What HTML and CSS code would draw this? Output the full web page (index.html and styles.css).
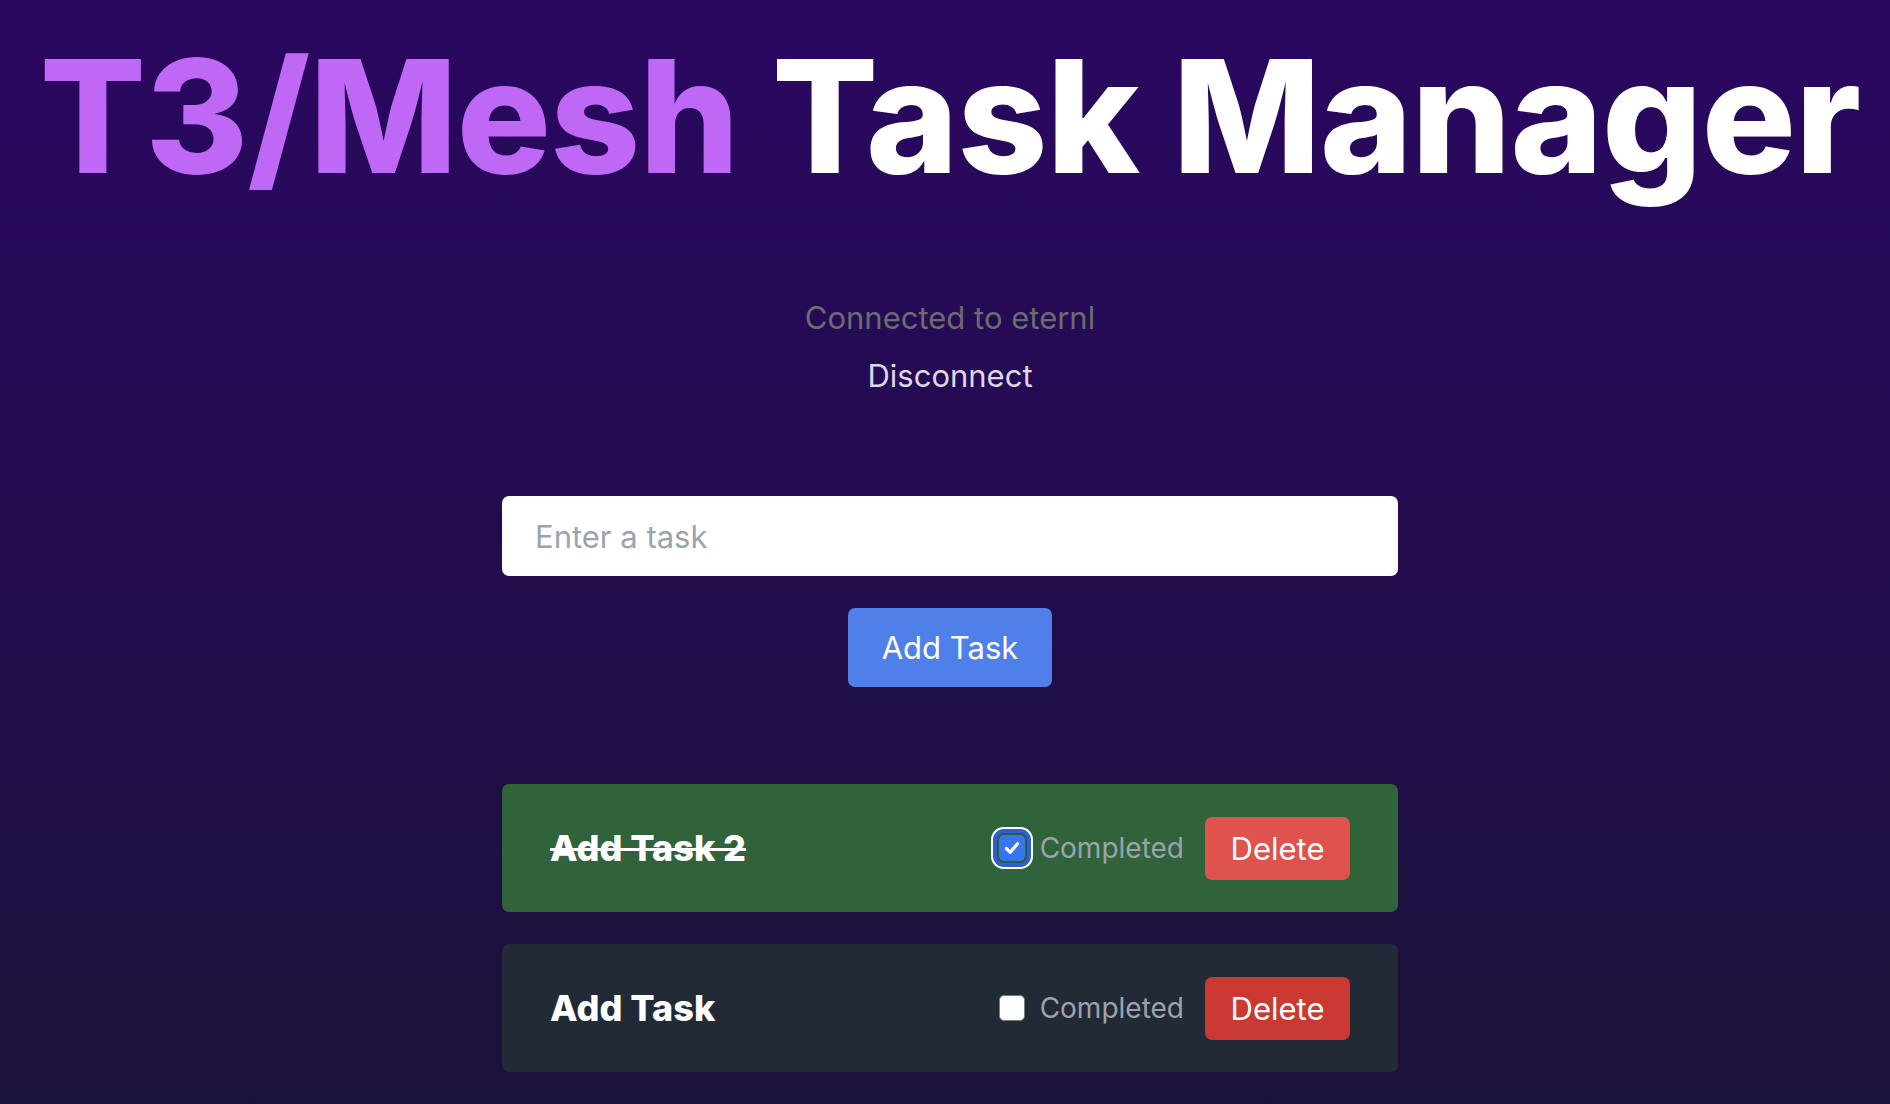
FILE: index.html
```html
<!DOCTYPE html>
<html lang="en">
<head>
<meta charset="utf-8">
<title>T3/Mesh Task Manager</title>
<link rel="stylesheet" href="styles.css">
</head>
<body>
<main class="page">
  <h1 class="title"><span class="accent">T3/Mesh</span> Task Manager</h1>
  <p class="status">Connected to eternl</p>
  <button class="link-btn" type="button">Disconnect</button>
  <form class="task-form">
    <input class="task-input" type="text" placeholder="Enter a task">
    <button class="add-btn" type="button">Add Task</button>
  </form>
  <ul class="task-list">
    <li class="task task-done">
      <span class="task-name">Add Task 2</span>
      <div class="task-actions">
        <label class="check-label">
          <span class="check check-on check-focus">
            <svg viewBox="0 0 20 20" width="20" height="20"><path d="M4.5 10.5 L8.3 14.3 L15.5 5.8" fill="none" stroke="#fff" stroke-width="3.2" stroke-linecap="round" stroke-linejoin="round"/></svg>
          </span>
          <span class="check-text">Completed</span>
        </label>
        <button class="del-btn del-light" type="button">Delete</button>
      </div>
    </li>
    <li class="task task-open">
      <span class="task-name">Add Task</span>
      <div class="task-actions">
        <label class="check-label">
          <span class="check"></span>
          <span class="check-text">Completed</span>
        </label>
        <button class="del-btn" type="button">Delete</button>
      </div>
    </li>
  </ul>
</main>
</body>
</html>
```

FILE: styles.css
```css
html, body {
  margin: 0;
  padding: 0;
}
body {
  min-height: 1104px;
  background: linear-gradient(to bottom, #2a0761 0%, #1b1239 100%);
  font-family: Inter, "Noto Sans", sans-serif;
  overflow: hidden;
}
.page {
  display: flex;
  flex-direction: column;
  align-items: center;
  padding-left: 10px;
  min-height: 1104px;
  box-sizing: border-box;
}
.title {
  margin: 38px 0 0;
  font-size: 157px;
  line-height: 157px;
  font-weight: 800;
  letter-spacing: -0.005em;
  color: #ffffff;
  white-space: nowrap;
}
.accent {
  color: #c068f6;
}
.status {
  margin: 100px 0 0;
  font-size: 31px;
  line-height: 46px;
  color: #6c6b70;
}
.link-btn {
  margin-top: 12px;
  padding: 0;
  border: 0;
  background: none;
  font-family: inherit;
  font-size: 31px;
  line-height: 46px;
  color: #dcd8e6;
}
.task-form {
  margin-top: 97px;
  display: flex;
  flex-direction: column;
  align-items: center;
  gap: 32px;
}
.task-input {
  width: 896px;
  height: 80px;
  box-sizing: border-box;
  border: 0;
  border-radius: 7px;
  padding: 0 33px;
  font-family: inherit;
  font-size: 31px;
  color: #111;
  background: #fff;
  outline: none;
}
.task-input::placeholder {
  color: #9ca3af;
}
.add-btn {
  height: 79px;
  padding: 0 34px;
  border: 0;
  border-radius: 7px;
  background: #4f80ea;
  color: #fff;
  font-family: inherit;
  font-size: 31px;
}
.task-list {
  list-style: none;
  margin: 97px 0 0;
  padding: 0;
  display: flex;
  flex-direction: column;
  gap: 32px;
}
.task {
  width: 896px;
  height: 128px;
  box-sizing: border-box;
  padding: 0 48px;
  border-radius: 7px;
  display: flex;
  align-items: center;
  justify-content: space-between;
}
.task-done {
  background: #31633b;
}
.task-open {
  background: #222a36;
}
.task-name {
  font-size: 36px;
  font-weight: 800;
  color: #fff;
  letter-spacing: 0;
}
.task-done .task-name {
  text-decoration: line-through;
  text-decoration-thickness: 3px;
}
.task-actions {
  display: flex;
  align-items: center;
}
.check-label {
  display: flex;
  align-items: center;
  gap: 15px;
}
.check {
  width: 26px;
  height: 26px;
  box-sizing: border-box;
  border-radius: 5px;
  background: #fff;
  border: 1.5px solid #7a7a7a;
  display: flex;
  align-items: center;
  justify-content: center;
}
.check-on {
  background: #3677f0;
  border: 0;
}
.check-focus {
  box-shadow: 0 0 0 2px #2f5f3a, 0 0 0 6px #2c60d0, 0 0 0 8px #ffffff;
}
.check-text {
  font-size: 28px;
  color: #9ca3af;
}
.del-btn {
  margin-left: 21px;
  width: 145px;
  height: 63px;
  border: 0;
  border-radius: 7px;
  background: #ca3a32;
  color: #fff;
  font-family: inherit;
  font-size: 31px;
  padding: 0;
}
.del-light {
  background: #de534e;
}
```
